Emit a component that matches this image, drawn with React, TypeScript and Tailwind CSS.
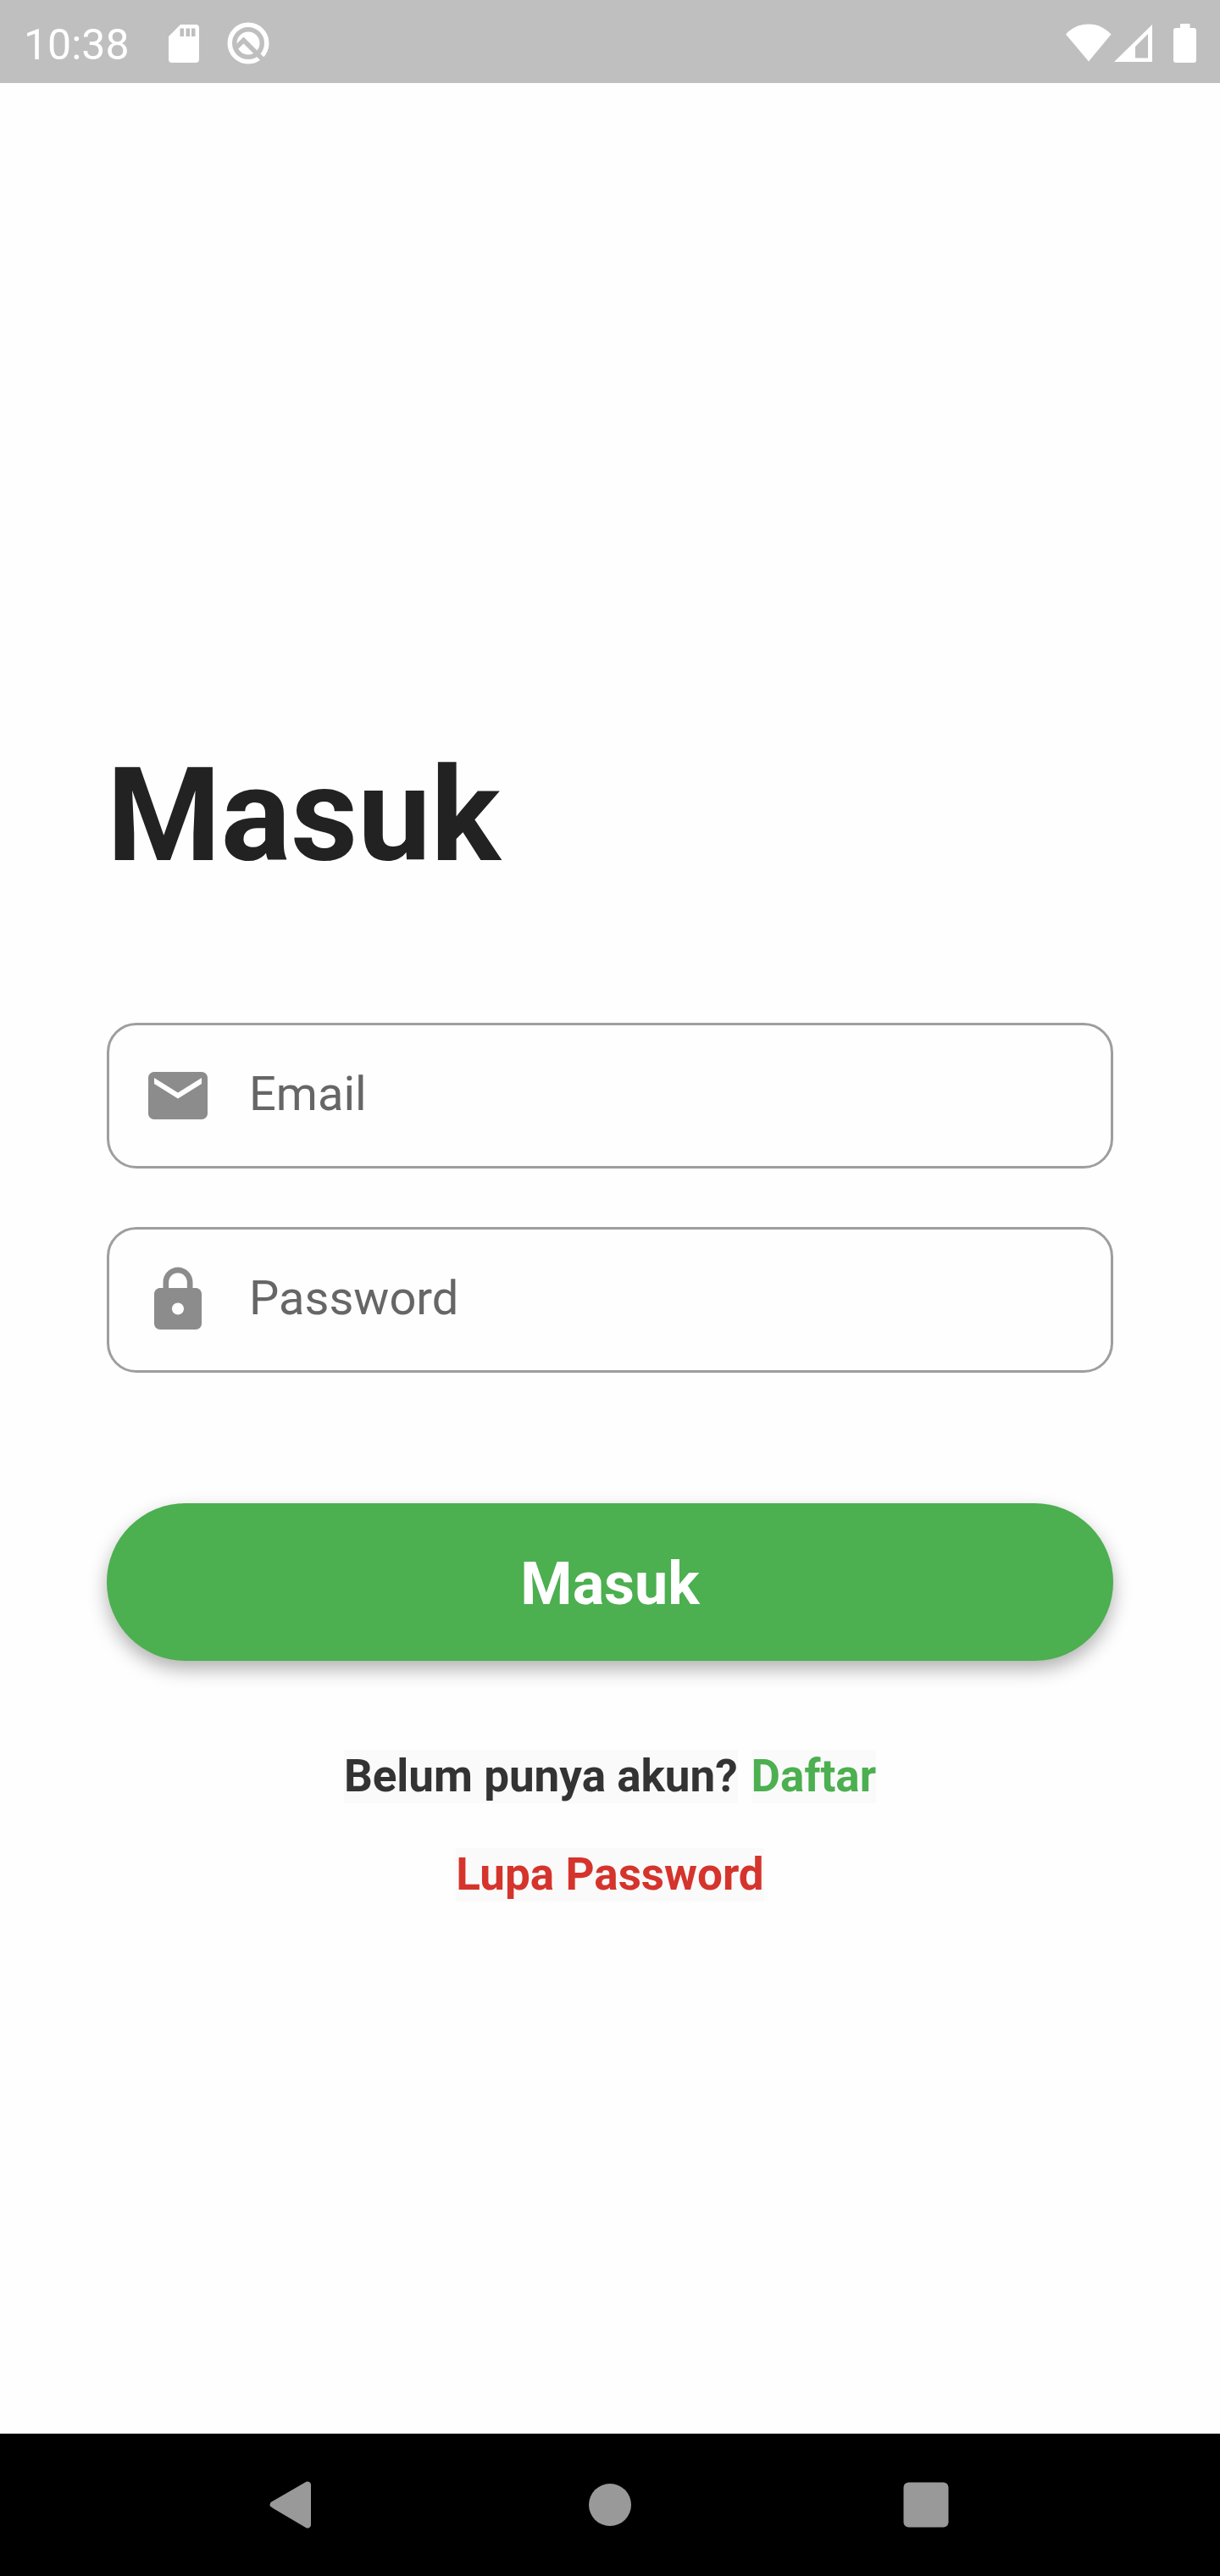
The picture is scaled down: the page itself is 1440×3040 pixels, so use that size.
import type { InputHTMLAttributes, ReactNode } from "react";

function SdCardIcon() {
  return (
    <svg viewBox="0 0 36 45" className="h-[45px] w-9" aria-hidden="true">
      <path
        fillRule="evenodd"
        fill="#fff"
        d="M14 0H32a4 4 0 0 1 4 4V41a4 4 0 0 1-4 4H4a4 4 0 0 1-4-4V14ZM13.500 4.500v9.500h4.500v-9.500ZM20.500 4.500v9.500h4.500v-9.500ZM27 4.500v9.500h4.500v-9.500Z"
      />
    </svg>
  );
}

function SystemLogoIcon() {
  return (
    <svg viewBox="0 0 52 52" className="size-13" aria-hidden="true">
      <circle cx="26" cy="26" r="21.750" fill="none" stroke="#fff" strokeWidth="5.500" />
      <circle cx="26" cy="26" r="13.500" fill="#fff" />
      <path d="M11 32 20.500 22.500 46 48" fill="none" stroke="#bfbfbf" strokeWidth="5.500" />
    </svg>
  );
}

function StatusBar() {
  return (
    <header className="flex h-[98px] items-center justify-between bg-[#bfbfbf] pr-7 pl-7 text-white">
      <div className="flex items-center">
        <time className="pt-2 text-[50px] leading-[58px]">10:38</time>
        <div className="ml-[46px] flex items-center gap-8 pt-1">
          <SdCardIcon />
          <SystemLogoIcon />
        </div>
      </div>
      <div className="flex items-center pt-1">
        <svg viewBox="0 0 54 46" className="h-[46px] w-[54px]" aria-label="Wi-Fi">
          <path fill="#fff" d="M0 12.500C7 5 16 0.500 27 0.500S46 5 53.500 12.500L27 44.500Z" />
        </svg>
        <svg viewBox="0 0 46 46" className="ml-[3px] h-[46px] w-[46px]" aria-label="Sinyal">
          <path
            fill="#fff"
            fillRule="evenodd"
            d="M0 45 45 1V45ZM40 12 25 27V40.500H40Z"
          />
        </svg>
        <svg viewBox="0 0 27 46" className="ml-6 h-[46px] w-[27px]" aria-label="Baterai">
          <path
            fill="#fff"
            d="M8 0H19.500V5H24a3 3 0 0 1 3 3V43a3 3 0 0 1-3 3H3a3 3 0 0 1-3-3V8A3 3 0 0 1 3 5H8Z"
          />
        </svg>
      </div>
    </header>
  );
}

type FieldProps = InputHTMLAttributes<HTMLInputElement> & { icon: ReactNode };

function Field({ icon, ...input }: FieldProps) {
  return (
    <label
      htmlFor={input.id}
      className="flex h-[172px] items-center gap-[42px] rounded-[35px] border-[3px] border-[#9e9e9e] px-[39px]"
    >
      <svg viewBox="0 0 24 24" fill="#8c8c8c" className="size-[84px] shrink-0" aria-hidden="true">
        {icon}
      </svg>
      <input
        {...input}
        aria-label={input.placeholder}
        className="min-w-0 flex-1 bg-transparent pb-1 text-[56px] leading-[66px] text-[#222222] outline-none placeholder:text-[#666666] placeholder:opacity-100"
      />
    </label>
  );
}

function NavigationBar() {
  return (
    <nav className="bg-black">
      <div className="mx-auto flex h-[168px] w-full max-w-[830px] items-center justify-between">
        <button type="button" aria-label="Kembali" className="p-3">
          <svg viewBox="3 0 60 60" className="size-15">
            <path
              fill="#999"
              d="M5 28.200a3.400 3.400 0 0 0 0 3.600L9 34.500 47.500 57.200A4 4 0 0 0 53 54V6a4 4 0 0 0-5.500-3.200L6 26.700Q5 27.300 5 28.200Z"
            />
          </svg>
        </button>
        <button type="button" aria-label="Beranda" className="p-3">
          <svg viewBox="0 0 60 60" className="size-15">
            <circle cx="30" cy="30" r="25" fill="#999" />
          </svg>
        </button>
        <button type="button" aria-label="Aplikasi terbaru" className="p-3">
          <svg viewBox="0 0 60 60" className="size-15">
            <rect x="3.500" y="3.500" width="53" height="53" rx="6" fill="#999" />
          </svg>
        </button>
      </div>
    </nav>
  );
}

export default function App() {
  return (
    <div className="flex min-h-screen flex-col bg-[#fefefe] font-['Roboto',sans-serif]">
      <StatusBar />
      <main className="flex-1 px-[126px] pt-[774px] pb-16">
        <h1 className="text-[154px] leading-[181px] font-bold text-[#222222]">Masuk</h1>
        <form className="mt-[154px]" onSubmit={(event) => event.preventDefault()}>
          <div className="flex flex-col gap-[69px]">
            <Field
              id="email"
              type="email"
              placeholder="Email"
              icon={
                <path d="M20 4H4c-1.100 0-1.990.9-1.990 2L2 18c0 1.100.9 2 2 2h16c1.100 0 2-.9 2-2V6c0-1.100-.9-2-2-2zm0 4l-8 5-8-5V6l8 5 8-5v2z" />
              }
            />
            <Field
              id="password"
              type="password"
              placeholder="Password"
              icon={
                <path d="M18 8h-1V6c0-2.760-2.240-5-5-5S7 3.240 7 6v2H6c-1.100 0-2 .9-2 2v10c0 1.100.9 2 2 2h12c1.100 0 2-.9 2-2V10c0-1.100-.9-2-2-2zm-6 9c-1.100 0-2-.9-2-2s.9-2 2-2 2 .9 2 2-.9 2-2 2zm3.100-9H8.900V6c0-1.710 1.390-3.100 3.100-3.100 1.710 0 3.100 1.390 3.100 3.100v2z" />
              }
            />
          </div>
          <button
            type="submit"
            className="mt-[154px] h-[186px] w-full rounded-full bg-[#4caf50] pt-1 text-[70px] leading-[82px] font-bold text-white shadow-[0_10px_22px_rgba(0,0,0,0.3)]"
          >
            Masuk
          </button>
        </form>
        <div className="mt-[105px] flex flex-col items-center gap-[53px] text-[53px] leading-[63px] font-bold">
          <p className="flex gap-4 text-[#333333]">
            <span className="bg-[#fafafa]">Belum punya akun?</span>
            <a href="#daftar" className="bg-[#fafafa] text-[#4caf50]">
              Daftar
            </a>
          </p>
          <a href="#lupa-password" className="bg-[#fafafa] text-[#d5342c]">
            Lupa Password
          </a>
        </div>
      </main>
      <NavigationBar />
    </div>
  );
}
